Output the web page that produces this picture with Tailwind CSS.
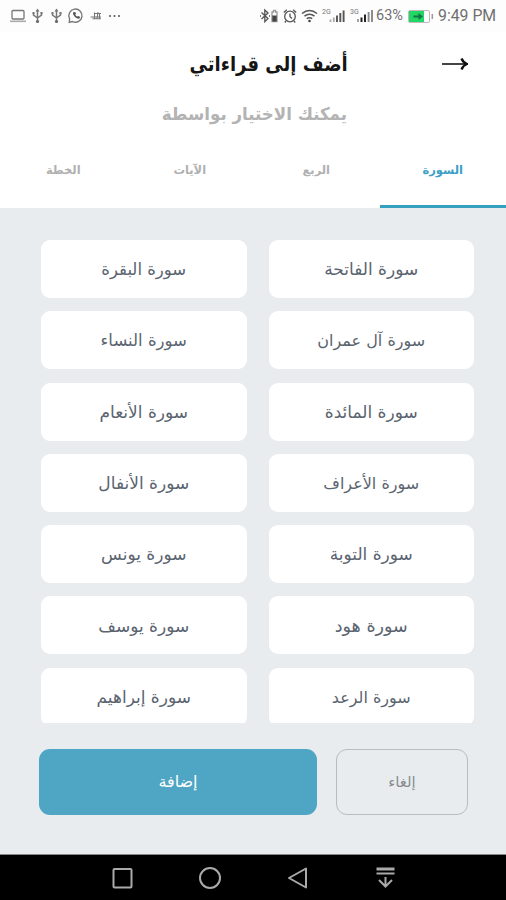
<!DOCTYPE html>
<html lang="ar" dir="rtl">
<head>
    <meta charset="UTF-8" />
    <meta name="viewport" content="width=device-width, initial-scale=1.0" />
    <title>أضف إلى قراءاتي</title>
    <script src="https://cdn.jsdelivr.net/npm/@tailwindcss/browser@4"></script>
</head>
<body class="bg-[#e8ecef] font-['DejaVu_Sans',sans-serif]">
    <div class="h-[900px] w-[506px] flex flex-col overflow-hidden">

        <!-- Status bar -->
        <div dir="ltr" class="h-8 shrink-0 bg-[#fdfdfd] flex items-center justify-between pl-2.5 pr-2 text-[#707070]">
            <svg class="w-[112px] h-8" viewBox="10 0 112 32" fill="none" stroke="#777" stroke-width="1.3">
                <rect x="12" y="10.5" width="12" height="8.5" rx="1" />
                <path d="M10 21.3h16" stroke="#aaa" stroke-width="1.600" />
                <g id="usb">
                    <path d="M37.500 10v12M33.500 13v2l4 3M41.500 12.500v2.500l-4 3" stroke-width="1.500" />
                    <path d="M37.500 8.500l2 3h-4z" fill="#777" stroke="none" />
                    <circle cx="37.500" cy="21.500" r="1.600" fill="#666" stroke="none" />
                    <path d="M32.500 12h2v2h-2zM40.500 12h2v2h-2z" fill="#777" stroke="none" />
                </g>
                <use href="#usb" x="19" />
                <path d="M69.300 22.300l.3-3.600a6.600 6.600 0 1 1 3 2.900z" stroke-width="1.400" />
                <path d="M73.300 12.300c-1.500 1.700 2.700 6.900 5.900 6.500l1-1.700-1.900-1.200-1 .7c-.9-.4-1.700-1.300-2-2.200l.7-.8-.8-1.600z" fill="#555" stroke="none" />
                <path d="M90.500 17h10.500M94 13.500h7M92.500 18.700h8.500M94.500 12.500v6.500M98 12l-1 7M99.500 13v6" stroke-width="1.100" />
                <g fill="#555" stroke="none">
                    <circle cx="110" cy="16" r="1" /><circle cx="114.500" cy="16" r="1" /><circle cx="119" cy="16" r="1" />
                </g>
            </svg>
            <div class="flex items-center font-[Roboto,sans-serif] text-[15px]">
                <svg class="w-[115px] h-8" viewBox="259 0 115 32" fill="none" stroke="#555" stroke-width="1.300">
                    <path d="M261.500 12.500l6.500 6-3.200 3.200V10l3.200 3-6.500 6M260 16h1M269 16h1" />
                    <path d="M272 12h1.500v-1.500h2V12h1.500v9.500h-5z" stroke="#999" />
                    <path d="M272.300 15.500h4.400v6h-4.400z" fill="#444" stroke="none" />
                    <circle cx="290" cy="16.500" r="5.300" />
                    <path d="M290 13.500v3.300l2 1.700M283.800 12.500l3-2.700M293.200 9.800l3 2.700M286 21l-1.200 1.500M294 21l1.200 1.500" />
                    <path d="M302 13.500q7.500-6 15 0M304.500 16.200q5-4 10 0M306.800 18.700q2.700-2 5.400 0" stroke-width="1.600" />
                    <circle cx="309.500" cy="21" r="1.300" fill="#444" stroke="none" />
                    <path d="M330.500 19.500v2.500M333.800 17.500v4.500" stroke="#aaa" stroke-width="1.800" />
                    <path d="M337 15.500v6.500M340.300 13v9M343.600 10.500v11.500" stroke-width="1.900" />
                    <path d="M358 19v3" stroke="#999" stroke-width="1.800" />
                    <path d="M361.500 17.500v4.500M365 14.500v7.500" stroke="#222" stroke-width="2" />
                    <path d="M368.600 12v10M372 10v12" stroke="#888" stroke-width="1.900" />
                    <text x="322" y="14" font-size="7" fill="#777" stroke="none">2G</text>
                    <text x="350" y="14" font-size="7" fill="#777" stroke="none">3G</text>
                </svg>
                <span class="ml-[2px] w-[29px] whitespace-nowrap text-[14.500px]">63%</span>
                <svg class="ml-[3px] w-[26px] h-[13px]" viewBox="0 0 26 13">
                    <rect x=".5" y=".5" width="21" height="12" rx="1.500" fill="#fff" stroke="#bbb" />
                    <path d="M1 1h15v11H1z" fill="#22d765" />
                    <path d="M5.500 5.500h5V3l4.500 3.500-4.500 3.500V7.500h-5z" fill="#174" />
                    <path d="M24.300 4v5" stroke="#999" stroke-width="1.500" />
                </svg>
                <span class="ml-[4px] w-[60px] whitespace-nowrap text-[15.800px]">9:49 PM</span>
            </div>
        </div>

        <!-- Header -->
        <header class="h-[108px] shrink-0 bg-white pr-[38px]">
            <div class="flex items-center h-16">
                <svg class="w-[26px] h-4" viewBox="0 0 26 16" fill="none" stroke="#111">
                    <path d="M0 8h24" stroke="#444" stroke-width="2" />
                    <path d="M19.500 2.500Q21 6.500 25 8Q21 9.500 19.500 13.500" stroke-width="2.400" />
                </svg>
                <h1 class="mr-[94px] origin-right scale-x-90 text-[20px] font-bold text-[#151515] whitespace-nowrap">أضف إلى قراءاتي</h1>
            </div>
            <p class="mr-[121px] origin-right scale-x-95 text-[17.500px] leading-9 font-bold text-[#b3b3b3] whitespace-nowrap">يمكنك الاختيار بواسطة</p>
        </header>

        <!-- Tabs -->
        <nav class="h-[68px] shrink-0 bg-white grid grid-cols-4 text-center text-[11.500px] leading-[60px] font-bold text-[#b0b0b0]">
            <a class="border-b-3 border-[#36a0bf] text-[#3b9fc4]">السورة</a>
            <a>الربع</a>
            <a>الآيات</a>
            <a>الخطة</a>
        </nav>

        <!-- Surah list -->
        <main class="mt-8 mr-8 ml-[41px] h-[483px] shrink-0 overflow-hidden rounded-b grid grid-cols-2 content-start gap-x-[22px] gap-y-[13.300px] text-[16.500px] text-[#5a6470]">
            <div class="h-[58px] rounded-[9px] bg-white flex items-center justify-center pt-0.5 text-[17px]">سورة الفاتحة</div>
            <div class="h-[58px] rounded-[9px] bg-white flex items-center justify-center pt-0.5">سورة البقرة</div>
            <div class="h-[58px] rounded-[9px] bg-white flex items-center justify-center pt-0.5 text-[16px]">سورة آل عمران</div>
            <div class="h-[58px] rounded-[9px] bg-white flex items-center justify-center pt-0.5">سورة النساء</div>
            <div class="h-[58px] rounded-[9px] bg-white flex items-center justify-center pt-0.5 text-[17px]">سورة المائدة</div>
            <div class="h-[58px] rounded-[9px] bg-white flex items-center justify-center pt-0.5 text-[17px]">سورة الأنعام</div>
            <div class="h-[58px] rounded-[9px] bg-white flex items-center justify-center pt-0.5 text-[16px]">سورة الأعراف</div>
            <div class="h-[58px] rounded-[9px] bg-white flex items-center justify-center pt-0.5 text-[17px]">سورة الأنفال</div>
            <div class="h-[58px] rounded-[9px] bg-white flex items-center justify-center pt-0.5 text-[17px]">سورة التوبة</div>
            <div class="h-[58px] rounded-[9px] bg-white flex items-center justify-center pt-0.5 text-[17px]">سورة يونس</div>
            <div class="h-[58px] rounded-[9px] bg-white flex items-center justify-center pt-0.5 text-[17.500px]">سورة هود</div>
            <div class="h-[58px] rounded-[9px] bg-white flex items-center justify-center pt-0.5 text-[17px]">سورة يوسف</div>
            <div class="h-[58px] rounded-[9px] bg-white flex items-center justify-center pt-0.5 text-[16px]">سورة الرعد</div>
            <div class="h-[58px] rounded-[9px] bg-white flex items-center justify-center pt-0.5 text-[17px]">سورة إبراهيم</div>
        </main>

        <!-- Actions -->
        <div class="mt-[26px] mr-[38px] ml-[39px] flex gap-[19px] text-[15px]">
            <button class="h-[66px] w-[132px] shrink-0 rounded-[11px] border border-[#b9bcbd] text-[#888c8f]">إلغاء</button>
            <button class="h-[66px] grow rounded-[11px] bg-[#4fa5c4] text-[16px] text-white">إضافة</button>
        </div>

        <!-- Navigation bar -->
        <div dir="ltr" class="mt-auto h-[46px] shrink-0 border-t border-[#888] bg-black flex items-center pl-[111px] gap-[66px]">
            <svg class="w-[22px] h-[22px]" viewBox="0 0 22 22" fill="none" stroke="#aaa" stroke-width="2"><rect x="2.500" y="2" width="18" height="18.500" rx="1" /></svg>
            <svg class="w-[22px] h-[22px]" viewBox="0 0 22 22" fill="none" stroke="#aaa" stroke-width="2"><circle cx="11" cy="11" r="10" /></svg>
            <svg class="w-[22px] h-[22px]" viewBox="0 0 22 22" fill="none" stroke="#aaa" stroke-width="2" stroke-linejoin="round"><path d="M19 1.500v19L2 11z" /></svg>
            <svg class="w-[22px] h-[22px]" viewBox="0 0 22 22" fill="none" stroke="#aaa" stroke-width="2"><path d="M1.500 2h18" stroke-width="3" /><path d="M1.500 6.500h18M10.500 10v9M4 13l6.500 6.500L17 13" /></svg>
        </div>
    </div>
</body>
</html>
